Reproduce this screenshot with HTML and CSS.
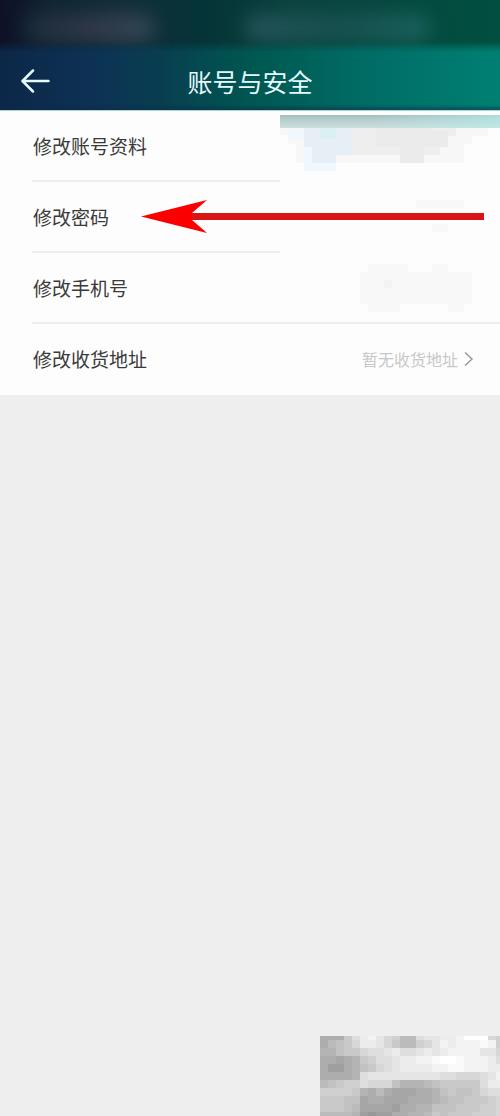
FILE: index.html
```html
<!DOCTYPE html>
<html lang="zh-CN">
<head>
  <meta charset="UTF-8" />
  <meta name="viewport" content="width=device-width, initial-scale=1.0"/>
  <title>账号与安全</title>
  <link rel="stylesheet" href="styles.css">
</head>
<body>

  <!-- Header -->
  <header class="header">
    <div class="status-bar">
      <span class="smudge smudge-left"></span>
      <span class="smudge smudge-right"></span>
    </div>
    <div class="topbar">
      <button class="back-button" aria-label="返回">
        <svg width="30" height="24" viewBox="0 0 30 24" fill="none" stroke="#e6fbff" stroke-width="2.5" stroke-linecap="round" stroke-linejoin="round">
          <path d="M13 1.500 L2.500 12 L13 22.500 M3 12 H28.500"/>
        </svg>
      </button>
      <h1 class="title">账号与安全</h1>
    </div>
  </header>

  <!-- Settings -->
  <main class="settings">
    <a class="row" href="#">
      <span class="label">修改账号资料</span>
      <svg class="mask" width="220" height="71" viewBox="0 0 220 71" shape-rendering="crispEdges" aria-hidden="true">
        <defs>
          <linearGradient id="shade" x1="0" y1="0" x2="0" y2="1">
            <stop offset="0" stop-color="#a3bdbb"/>
            <stop offset="0.3" stop-color="#b4cbca"/>
            <stop offset="1" stop-color="#cbdfdd"/>
          </linearGradient>
          <linearGradient id="tint" x1="0" y1="0" x2="1" y2="0">
            <stop offset="0.4" stop-color="#b5efed" stop-opacity="0"/>
            <stop offset="1" stop-color="#b5efed" stop-opacity="0.6"/>
          </linearGradient>
        </defs>
        <rect width="220" height="71" fill="#fdfdfd"/>
        <path fill="#f7f7f7" d="M0 17H208V25H192V33H184V52H56V60H24V52H16V33H8V24H0z"/>
        <path fill="#eeeeee" d="M72 17H176V25H168V36H160V44H144V52H120V44H72z"/>
        <path fill="#ebebeb" d="M96 17H152V20H168V36H144V52H120V36H96z"/>
        <path fill="#f0f8fd" d="M8 17H72V44H56V60H24V28H8z"/>
        <path fill="#e6eff6" d="M24 17H72V44H56V52H32V36H24z"/>
        <path fill="#daf0f3" d="M40 17H56V28H40z"/>
        <rect y="4" width="220" height="13" fill="url(#shade)"/>
        <rect y="4" width="220" height="13" fill="url(#tint)"/>
      </svg>
    </a>
    <a class="row" href="#">
      <span class="label">修改密码</span>
      <svg class="mask" width="220" height="71" viewBox="0 0 220 71" shape-rendering="crispEdges" aria-hidden="true">
        <rect width="220" height="71" fill="#fdfdfd"/>
        <path fill="#f8f8f8" d="M136 18H184V26H136zM152 42H168V50H152z"/>
      </svg>
    </a>
    <a class="row" href="#">
      <span class="label">修改手机号</span>
      <svg class="mask" width="220" height="62" viewBox="0 0 220 62" shape-rendering="crispEdges" aria-hidden="true">
        <path fill="#f8f8f8" d="M88 11H128V19H152V11H168V19H192V51H184V59H168V51H120V59H88V51H80V19H88z"/>
        <rect x="104" y="27" width="8" height="8" fill="#f3f3f3"/>
      </svg>
    </a>
    <a class="row" href="#">
      <span class="label">修改收货地址</span>
      <span class="value">暂无收货地址</span>
      <svg class="chevron" width="10" height="16" viewBox="0 0 10 16" fill="none" stroke="#999999" stroke-width="1.500">
        <path d="M1 1.500 L8 8 L1 14.500"/>
      </svg>
    </a>

    <!-- Pointer to the password row -->
    <svg class="pointer" width="344" height="34" viewBox="0 0 344 34" aria-hidden="true">
      <path fill="#d91414" d="M48 13 H343 V20 H48z"/>
      <path fill="#fa0000" d="M0 16.500 L66 0 L51 13 V20 L66 33z"/>
    </svg>
  </main>

  <!-- Mosaic patch, filled by script.js -->
  <svg class="mosaic" id="mosaic" width="180" height="84" viewBox="0 0 180 84" aria-hidden="true"></svg>

  <script src="script.js"></script>
</body>
</html>
```

FILE: styles.css
```css
body {
  margin: 0;
  min-height: 100vh;
  position: relative;
  background-color: #eeeeee;
  color: #333333;
  font-family: "Noto Sans CJK SC", sans-serif;
}

.header {
  background: linear-gradient(to right, #0c2748 0%, #0d3154 18%, #083e50 32%, #005751 50%, #006e66 75%, #008072 100%);
  border-bottom: 1px solid #a9d6dc;
}

.status-bar {
  position: relative;
  height: 52px;
  overflow: hidden;
  background: linear-gradient(to right, #0e1127 0%, #102432 10%, #122e39 25%, #053337 40%, #0b433e 60%, #004f40 100%);
  -webkit-mask-image: linear-gradient(to bottom, #000 80%, transparent);
  mask-image: linear-gradient(to bottom, #000 80%, transparent);
}

.smudge {
  position: absolute;
  top: 14px;
  height: 28px;
  border-radius: 14px;
  filter: blur(9px);
}

.smudge-left {
  left: 5%;
  width: 26%;
  background: linear-gradient(to right, #1c2d3b, #32394a 55%, #324854);
}

.smudge-right {
  left: 49%;
  width: 37%;
  background: linear-gradient(to right, #24535a, #17504f 50%, #1a625d);
}

.topbar {
  position: relative;
  display: flex;
  align-items: center;
  justify-content: center;
  height: 58px;
  box-shadow: inset 0 -5px 3px -2px rgba(16, 44, 72, 0.5);
}

.back-button {
  position: absolute;
  left: 20px;
  display: flex;
  padding: 0;
  border: none;
  background: none;
  cursor: pointer;
}

.title {
  margin: 0;
  font-size: 25px;
  line-height: 36px;
  font-weight: 400;
  color: #e6fbff;
}

.settings {
  position: relative;
  padding-left: 32px;
  background-color: #fdfdfd;
}

.row {
  position: relative;
  display: flex;
  align-items: center;
  box-sizing: border-box;
  height: 71px;
  padding: 0 26px 0 1px;
  border-bottom: 2px solid #eeeeee;
  color: #3a3a3a;
  text-decoration: none;
}

.row:last-of-type {
  border-bottom-color: transparent;
}

.label {
  flex: 1;
  font-size: 19px;
  line-height: 28px;
}

.value {
  margin-right: 6px;
  font-size: 16px;
  line-height: 24px;
  color: #c8c8c8;
}

.mask {
  position: absolute;
  top: 0;
  right: 0;
}

.pointer {
  position: absolute;
  top: 89px;
  left: 141px;
}

.mosaic {
  position: absolute;
  right: 0;
  bottom: 0;
}
```

FILE: script.js
```js
// one hex digit per block, 0 = darkest, f = white
const rows = [
  "3337acdb9855abbccdfff98",
  "35679ccb975589bdcddded8",
  "446779aabcaabcbcddddbb9",
  "3323478aabccddeffedddca",
  "31134679abccccddeedddcc",
  "33334abbbbbbbbbaa999abd",
  "56788a99964445677777acc",
  "888874353222334676679aa",
  "77766233222333456677789",
  "77765222213344666777889",
  "55554101133445767778889"
];

const mosaic = document.getElementById("mosaic");

function addBlock(x, y, height, shade) {
  const block = document.createElementNS("http://www.w3.org/2000/svg", "rect");
  block.setAttribute("x", x);
  block.setAttribute("y", y);
  block.setAttribute("width", 8);
  block.setAttribute("height", height);
  block.setAttribute("fill", `rgb(${shade}, ${shade}, ${shade})`);
  mosaic.appendChild(block);
}

rows.forEach((row, r) => {
  [...row].forEach((digit, c) => {
    const shade = Math.min(255, 152 + parseInt(digit, 16) * 7);
    // the first row is a half block
    addBlock(c * 8, r === 0 ? 4 : r * 8, r === 0 ? 4 : 8, shade);
  });
});
```
